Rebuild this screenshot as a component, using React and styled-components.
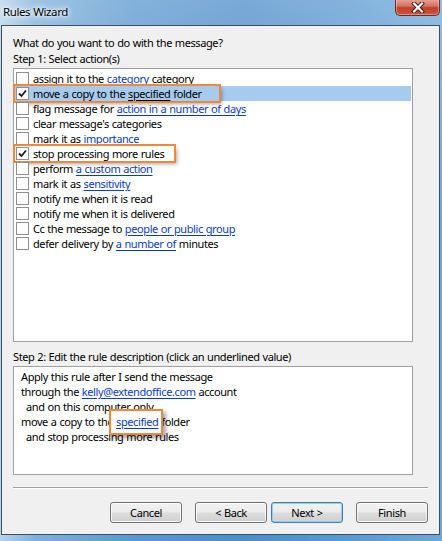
import React from 'react'
import styled, { createGlobalStyle } from 'styled-components'

const Global = createGlobalStyle`
  html, body { margin: 0; padding: 0; }
  body {
    width: 442px;
    height: 541px;
    overflow: hidden;
    font-family: "Noto Sans", "Open Sans", sans-serif;
    font-size: 11px;
    letter-spacing: -0.4px;
    word-spacing: 0.4px;
    color: #000;
  }
`

const Frame = styled.div`
  width: 442px;
  height: 541px;
  box-sizing: border-box;
  display: flex;
  flex-direction: column;
  padding: 0 2px 6px 1px;
  background:
    linear-gradient(180deg, rgba(255,255,255,0.25) 0%, rgba(255,255,255,0) 40%),
    linear-gradient(90deg, #b7d3ea 0%, #7fb0dc 8%, #5a98cf 30%, #4d8dc8 55%, #5b9bd2 80%, #6ea8da 100%);
`

const TitleBar = styled.div`
  height: 25px;
  display: flex;
  justify-content: space-between;
  align-items: flex-start;
  flex-shrink: 0;
`

const Title = styled.span`
  margin: 4px 0 0 2px;
  font-size: 11.5px;
  line-height: 16px;
  text-shadow: 0 0 6px #fff, 0 0 3px #fff, 0 0 10px #fff;
`

const CloseButton = styled.div`
  width: 45px;
  height: 17px;
  margin-top: -1px;
  box-sizing: border-box;
  border: 1px solid #6b2a22;
  border-top: none;
  border-radius: 0 0 5px 5px;
  background: linear-gradient(180deg, #e9a89b 0%, #d4705e 45%, #c0402b 55%, #c9573f 100%);
  box-shadow: inset 0 0 0 1px rgba(255,255,255,0.35);
  display: flex;
  align-items: center;
  justify-content: center;
`

const Client = styled.div`
  flex: 1;
  background: #f0f0f0;
  border: 1px solid #3f4f60;
  padding: 9px 11px 10px 11px;
  display: flex;
  flex-direction: column;
`

const Label = styled.div`
  line-height: 16px;
  height: 16px;
  margin-top: ${p => p.$mt || 0}px;
  white-space: nowrap;
`

const ListBox = styled.div`
  width: 400px;
  height: 274px;
  box-sizing: border-box;
  margin-top: 1px;
  background: #fff;
  border: 1px solid #a0a0a0;
  padding: 2px 0 0 1px;
`

const Row = styled.div`
  height: 15px;
  line-height: 15px;
  display: flex;
  align-items: center;
  padding-left: 1px;
  margin-right: 1px;
  background: ${p => (p.$selected ? '#a6cbef' : 'transparent')};
  white-space: nowrap;
`

const Callout = styled.span`
  display: inline-flex;
  align-items: center;
  height: 15px;
  margin-left: -1px;
  padding-left: 1px;
  padding-right: ${p => p.$padRight}px;
  outline: 2px solid #f0883c;
  box-shadow: 3px 3px 4px rgba(0, 0, 0, 0.35);
`

const Check = styled.span`
  width: 13px;
  height: 13px;
  box-sizing: border-box;
  border: 1px solid #8e8f8f;
  background: #fff;
  margin-right: 4px;
  display: inline-flex;
  align-items: center;
  justify-content: center;
  flex-shrink: 0;
`

const Link = styled.span`
  color: ${p => (p.$plain ? '#000' : '#0b3bc4')};
  text-decoration: underline;
  text-underline-offset: 2px;
`

const DescBox = styled.div`
  width: 400px;
  height: 109px;
  box-sizing: border-box;
  margin-top: 1px;
  background: #fff;
  border: 1px solid #a0a0a0;
  padding: 2px 0 0 7px;
`

const DescLine = styled.div`
  line-height: 15px;
  height: 15px;
  padding-left: ${p => (p.$indent ? 5 : 0)}px;
  white-space: nowrap;
`

const Boxed = styled.span`
  position: relative;
  z-index: 0;
  &::before {
    content: '';
    position: absolute;
    z-index: -1;
    left: -7px;
    right: -5px;
    top: -5px;
    bottom: -6px;
    background: #fff;
    border: 2px solid #f0883c;
    box-shadow: 3px 3px 4px rgba(0, 0, 0, 0.35);
  }
`

const Separator = styled.div`
  margin-top: 12px;
  height: 1px;
  background: #a0a0a0;
  border-bottom: 1px solid #fff;
`

const ButtonRow = styled.div`
  margin-top: 13px;
  display: flex;
  justify-content: flex-end;
`

const Button = styled.div`
  width: 72px;
  height: 21px;
  box-sizing: border-box;
  margin-left: ${p => p.$gap}px;
  border: 1px solid ${p => (p.$default ? '#3c7fb1' : '#707070')};
  border-radius: 3px;
  background: linear-gradient(180deg, #f2f2f2 0%, #ebebeb 48%, #dddddd 52%, #cfcfcf 100%);
  box-shadow: inset 0 0 0 1px ${p => (p.$default ? '#8fd0f3' : 'rgba(255,255,255,0.8)')};
  display: flex;
  align-items: center;
  justify-content: center;
  line-height: 19px;
`

const CheckBox = ({ checked }) => (
  <Check>
    {checked && (
      <svg width="9" height="9" viewBox="0 0 9 9">
        <path d="M1 4.5 L3.5 7 L8 1.5" fill="none" stroke="#1a1a1a" strokeWidth="1.8" />
      </svg>
    )}
  </Check>
)

export default function App() {
  return (
    <Frame>
      <Global />
      <TitleBar>
        <Title>Rules Wizard</Title>
        <CloseButton>
          <svg width="14" height="11" viewBox="0 0 14 11">
            <path d="M3 1.5 L11 9.5 M11 1.5 L3 9.5" stroke="#3a1a16" strokeWidth="4" strokeLinecap="square" />
            <path d="M3 1.5 L11 9.5 M11 1.5 L3 9.5" stroke="#fff" strokeWidth="2.2" strokeLinecap="square" />
          </svg>
        </CloseButton>
      </TitleBar>
      <Client>
        <Label>What do you want to do with the message?</Label>
        <Label>Step 1: Select action(s)</Label>
        <ListBox>
          <Row>
            <CheckBox />assign it to the&nbsp;<Link>category</Link>&nbsp;category
          </Row>
          <Row $selected>
            <Callout $padRight={17}>
              <CheckBox checked />move a copy to the&nbsp;<Link $plain>specified</Link>&nbsp;folder
            </Callout>
          </Row>
          <Row>
            <CheckBox />flag message for&nbsp;<Link>action in a number of days</Link>
          </Row>
          <Row>
            <CheckBox />clear message's categories
          </Row>
          <Row>
            <CheckBox />mark it as&nbsp;<Link>importance</Link>
          </Row>
          <Row>
            <Callout $padRight={10}>
              <CheckBox checked />stop processing more rules
            </Callout>
          </Row>
          <Row>
            <CheckBox />perform&nbsp;<Link>a custom action</Link>
          </Row>
          <Row>
            <CheckBox />mark it as&nbsp;<Link>sensitivity</Link>
          </Row>
          <Row>
            <CheckBox />notify me when it is read
          </Row>
          <Row>
            <CheckBox />notify me when it is delivered
          </Row>
          <Row>
            <CheckBox />Cc the message to&nbsp;<Link>people or public group</Link>
          </Row>
          <Row>
            <CheckBox />defer delivery by&nbsp;<Link>a number of</Link>&nbsp;minutes
          </Row>
        </ListBox>
        <Label $mt={7}>Step 2: Edit the rule description (click an underlined value)</Label>
        <DescBox>
          <DescLine>Apply this rule after I send the message</DescLine>
          <DescLine>
            through the <Link>kelly@extendoffice.com</Link> account
          </DescLine>
          <DescLine $indent>and on this computer only</DescLine>
          <DescLine>
            move a copy to the <Boxed><Link>specified</Link></Boxed> folder
          </DescLine>
          <DescLine $indent>and stop processing more rules</DescLine>
        </DescBox>
        <Separator />
        <ButtonRow>
          <Button $gap={0}>Cancel</Button>
          <Button $gap={13}>&lt; Back</Button>
          <Button $gap={4} $default>Next &gt;</Button>
          <Button $gap={13}>Finish</Button>
        </ButtonRow>
      </Client>
    </Frame>
  )
}
